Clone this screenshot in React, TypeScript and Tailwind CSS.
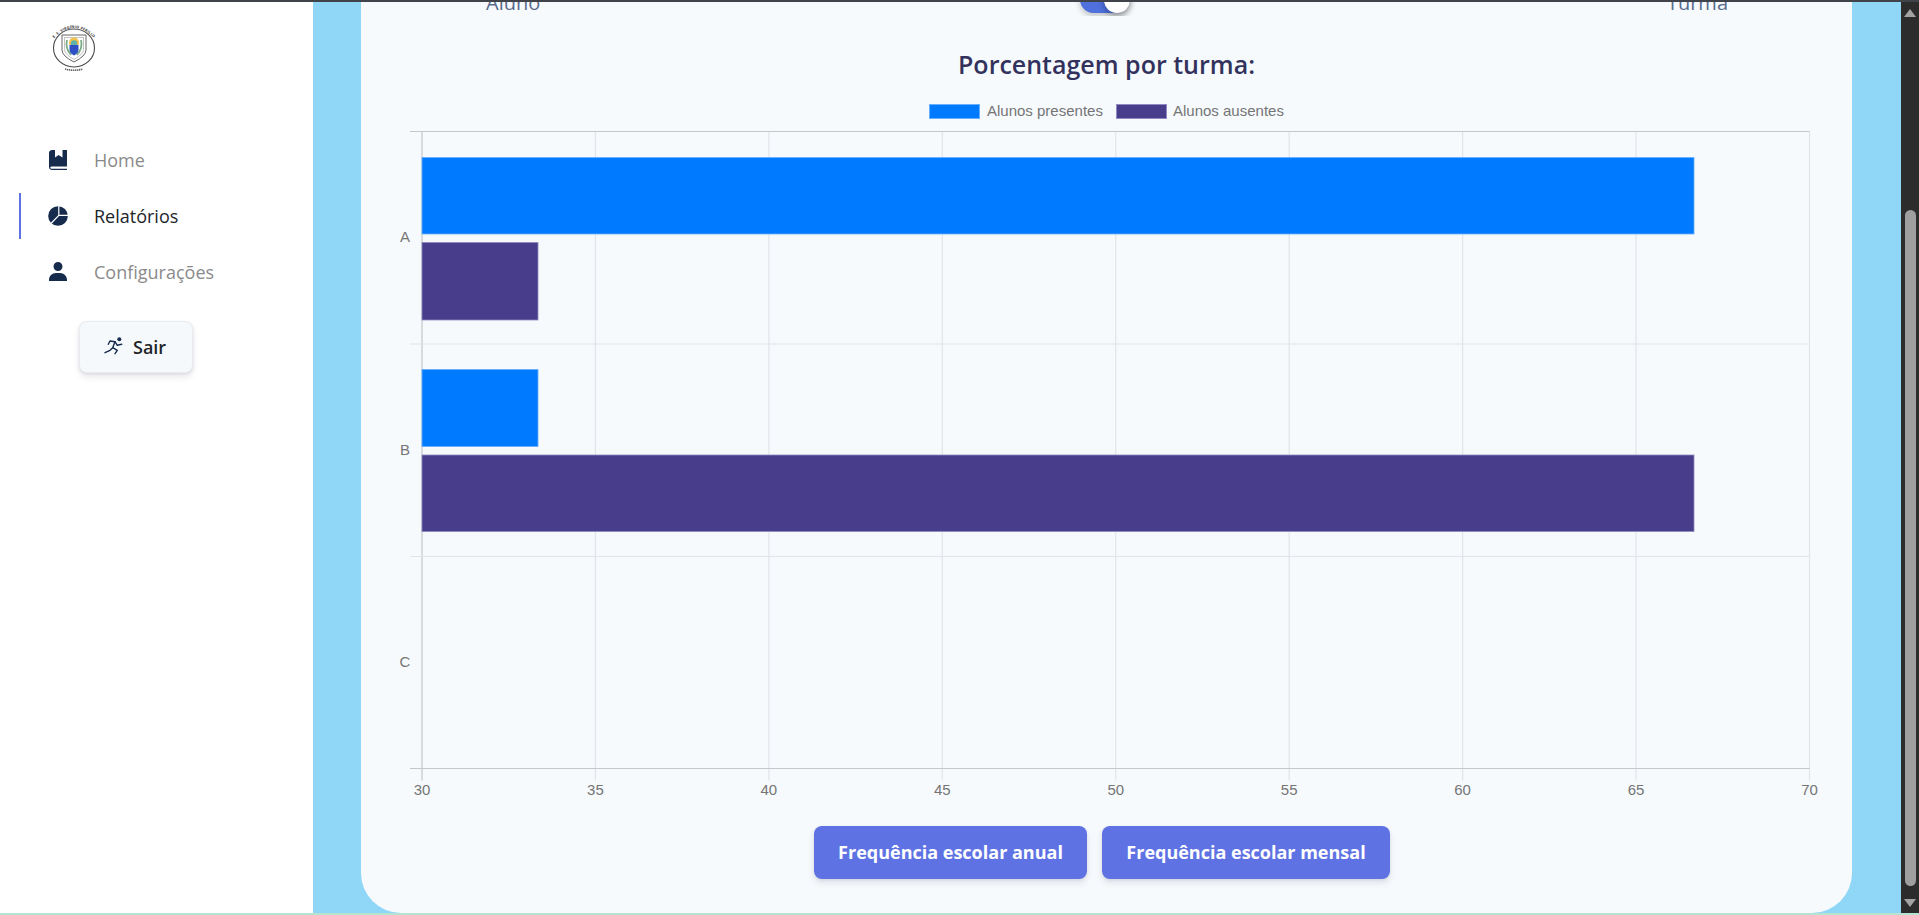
import React from 'react';
import { BiSolidUser } from 'react-icons/bi';

const ticks = [30, 35, 40, 45, 50, 55, 60, 65, 70];
const plotLeft = 422;
const plotRight = 1809.5;
const plotTop = 131.5;
const plotBottom = 768.5;
const step = (plotRight - plotLeft) / 8;

// chart coordinates are page coordinates minus the svg origin
const originX = 361;
const originY = 90;

const bars = [
  { y: 157.5, h: 76.5, w: 1272, color: '#007bff', edge: '#66b0ff' },
  { y: 242.5, h: 77.5, w: 116, color: '#483d8b', edge: '#9189c0' },
  { y: 369.5, h: 77, w: 116, color: '#007bff', edge: '#66b0ff' },
  { y: 455, h: 76.5, w: 1272, color: '#483d8b', edge: '#9189c0' },
];

const Logo = () => (
  <svg width="48" height="50" viewBox="0 0 48 50" aria-label="Logo da escola">
    <defs>
      <path id="arcTop" d="M1.5 19 Q24 -7 46.5 19" />
    </defs>
    <text fontSize="3.7" fontWeight="700" fill="#333" fontFamily="'Open Sans', sans-serif" letterSpacing="0.2">
      <textPath href="#arcTop" startOffset="7%">E. E. VIRGÍNIO PERILLO</textPath>
    </text>
    <path d="M15 47 Q24 49.500 33 47" fill="none" stroke="#666" strokeWidth="1.600" strokeDasharray="1.400 0.600" />
    <ellipse cx="24" cy="26" rx="20.500" ry="19" fill="#fff" stroke="#4a4a4a" strokeWidth="1.100" />
    <path d="M12 13 H36 V28 Q36 34 24 40 Q12 34 12 28 Z" fill="#fff" stroke="#666" strokeWidth="1" />
    <path d="M14.500 15.500 H33.500 V27.500 Q33.500 32 24 37.500 Q14.500 32 14.500 27.500 Z" fill="#fff" stroke="#999" strokeWidth="0.600" />
    <path d="M17 18 Q15 26 21 33" fill="none" stroke="#79ab86" strokeWidth="1.800" />
    <path d="M31 18 Q33 26 27 33" fill="none" stroke="#79ab86" strokeWidth="1.800" />
    <circle cx="24" cy="20.500" r="5" fill="#f2c14e" />
    <circle cx="24" cy="21.500" r="3.200" fill="#5fb3a8" />
    <path d="M19.500 23 H28.500 V28 Q28.500 31 24 33.500 Q19.500 31 19.500 28 Z" fill="#2f4fc4" />
  </svg>
);

const BookIcon = () => (
  <svg width="24" height="24" viewBox="0 0 24 24" className="fill-[#172b4d]">
    <path d="M19 2h-2.500v7.500L12.500 7l-3.500 2.500V2H6C4.800 2 3 2.800 3 5v14c0 2.200 1.800 3 3 3h15v-1.200H6c-.9 0-1.700-.5-1.700-1.300S5.100 18.500 6 18.500h15V2h-2z" />
  </svg>
);

const PieIcon = () => (
  <svg width="24" height="24" viewBox="0 0 24 24">
    <circle cx="12" cy="12" r="9.800" className="fill-[#172b4d]" />
    <path d="M12.800 1.500 V11.300 H22.500 M12.800 11.300 L5 19.500" fill="none" stroke="#fff" strokeWidth="1.200" />
  </svg>
);

const RunIcon = () => (
  <svg width="20" height="20" viewBox="0 0 20 20" fill="none" stroke="#172b4d" strokeWidth="1.400" strokeLinecap="round" strokeLinejoin="round">
    <circle cx="15.300" cy="3.300" r="2" fill="#172b4d" stroke="none" />
    <path d="M4.300 8.300 L6 5 L11 5.700 L8.700 11.700 L13.300 14.300 L11 17.700" />
    <path d="M11 5.700 L13.300 9.300 L17.700 8.300" />
    <path d="M8.700 11.700 L6 14.300 L1 16.700" />
  </svg>
);

const Chart = () => (
  <svg width="1491" height="720" viewBox={`${originX} ${originY} 1491 720`} fontFamily="'Liberation Sans', Arial, sans-serif">
    <rect x="929.500" y="104.500" width="50" height="14" fill="#007bff" stroke="#66b0ff" />
    <text x="987" y="116" fontSize="15" fill="#757575">Alunos presentes</text>
    <rect x="1116.500" y="104.500" width="50" height="14" fill="#483d8b" stroke="#9189c0" />
    <text x="1173" y="116" fontSize="15" fill="#757575">Alunos ausentes</text>

    {ticks.map((t, i) => (
      <g key={t}>
        <line
          x1={plotLeft + i * step}
          x2={plotLeft + i * step}
          y1={plotTop}
          y2={plotBottom + 12}
          stroke={i === 0 ? '#c4c7ca' : '#e1e4e8'}
          strokeWidth="1.200"
        />
        <text x={plotLeft + i * step} y="795" fontSize="15" fill="#757575" textAnchor="middle">
          {t}
        </text>
      </g>
    ))}
    <line x1="410" x2={plotRight} y1={plotTop} y2={plotTop} stroke="#c4c7ca" strokeWidth="1.200" />
    <line x1="410" x2={plotRight} y1="344" y2="344" stroke="#e1e4e8" strokeWidth="1.200" />
    <line x1="410" x2={plotRight} y1="556.500" y2="556.500" stroke="#e1e4e8" strokeWidth="1.200" />
    <line x1="410" x2={plotRight} y1={plotBottom} y2={plotBottom} stroke="#c4c7ca" strokeWidth="1.200" />

    {['A', 'B', 'C'].map((label, i) => (
      <text key={label} x="405" y={242 + i * 212.5} fontSize="15" fill="#757575" textAnchor="middle">
        {label}
      </text>
    ))}

    {bars.map((b) => (
      <rect key={b.y} x={plotLeft} y={b.y} width={b.w} height={b.h} fill={b.color} stroke={b.edge} strokeWidth="0.8" />
    ))}
  </svg>
);

const Scrollbar = () => (
  <div className="w-[18px] shrink-0 bg-[#2c2c2c] flex flex-col items-center">
    <svg width="14" height="10" viewBox="0 0 14 10" className="mt-[6px] shrink-0 fill-[#a3a3a3]">
      <path d="M7 1 L13 9 H1 Z" />
    </svg>
    <div className="mt-[192px] w-[11px] h-[676px] rounded-full bg-[#9f9f9f]" />
    <svg width="14" height="10" viewBox="0 0 14 10" className="mt-[12px] shrink-0 fill-[#a3a3a3]">
      <path d="M7 9 L13 1 H1 Z" />
    </svg>
  </div>
);

const App: React.FC = () => {
  return (
    <div className="w-full h-[915px] overflow-hidden flex flex-col font-['Open_Sans',sans-serif]">
      <div className="h-[2px] shrink-0 bg-[#40434a]" />
      <div className="flex-1 min-h-0 flex">
        <aside className="w-[313px] shrink-0 bg-white">
          <div className="pl-[50px] pt-[20px] h-[135px]">
            <Logo />
          </div>
          <nav className="pl-[19px] flex flex-col gap-[10px]">
            <a className="h-[46px] pl-[27px] flex items-center gap-[24px] text-[18px] text-[#8a8a8a]">
              <BookIcon />
              Home
            </a>
            <a className="h-[46px] pl-[25px] border-l-2 border-[#5e72e4] flex items-center gap-[24px] text-[18px] text-[#212529]">
              <PieIcon />
              Relatórios
            </a>
            <a className="h-[46px] pl-[27px] flex items-center gap-[24px] text-[18px] text-[#8a8a8a]">
              <BiSolidUser className="w-[24px] h-[24px] text-[#172b4d]" />
              Configurações
            </a>
          </nav>
          <button className="ml-[79px] mt-[26px] w-[114px] h-[52px] pl-[24px] rounded-lg bg-[#f6f9fc] border border-[#e9ecef] shadow-[0_4px_6px_rgba(50,50,93,0.11),0_1px_3px_rgba(0,0,0,0.08)] flex items-center gap-[9px] text-[18px] font-semibold text-[#212529]">
            <span className="-mt-[3px]">
              <RunIcon />
            </span>
            Sair
          </button>
        </aside>
        <main className="flex-1 min-w-0 bg-[#8fd6f7] pl-[48px]">
          <div className="w-[1491px] h-[911px] bg-[#f6fafd] rounded-b-[40px] flex flex-col overflow-hidden">
            <div className="h-[14px] shrink-0 overflow-hidden relative">
              <div className="absolute -top-[12px] left-0 right-0 h-[26px] flex justify-between items-end pl-[125px] pr-[124px] text-[20px] leading-[26px] text-[#5a6b8c]">
                <span>Aluno</span>
                <span>Turma</span>
              </div>
              <div className="absolute left-[719px] -top-[16px] w-[50px] h-[27px] rounded-full bg-[#4f70dd] shadow-[0_3px_6px_rgba(0,0,0,0.22)]">
                <div className="absolute right-0 top-0 w-[26px] h-[27px] rounded-full bg-white shadow-[0_3px_6px_rgba(0,0,0,0.3)]" />
              </div>
            </div>
            <h2 className="mt-[31px] h-[34px] text-center text-[25px] leading-[34px] font-semibold text-[#32325d]">
              Porcentagem por turma:
            </h2>
            <div className="mt-[9px] h-[720px] shrink-0">
              <Chart />
            </div>
            <div className="mt-[16px] flex justify-center gap-[15px] pr-[9px]">
              <button className="w-[273px] h-[53px] rounded-lg bg-[#5e72e4] text-white text-[18px] font-bold shadow-[0_4px_6px_rgba(50,50,93,0.11),0_1px_3px_rgba(0,0,0,0.08)]">
                Frequência escolar anual
              </button>
              <button className="w-[288px] h-[53px] rounded-lg bg-[#5e72e4] text-white text-[18px] font-bold shadow-[0_4px_6px_rgba(50,50,93,0.11),0_1px_3px_rgba(0,0,0,0.08)]">
                Frequência escolar mensal
              </button>
            </div>
          </div>
        </main>
        <Scrollbar />
      </div>
      <div className="h-[2px] shrink-0 bg-[#b5e3d0]" />
    </div>
  );
};

export default App;
